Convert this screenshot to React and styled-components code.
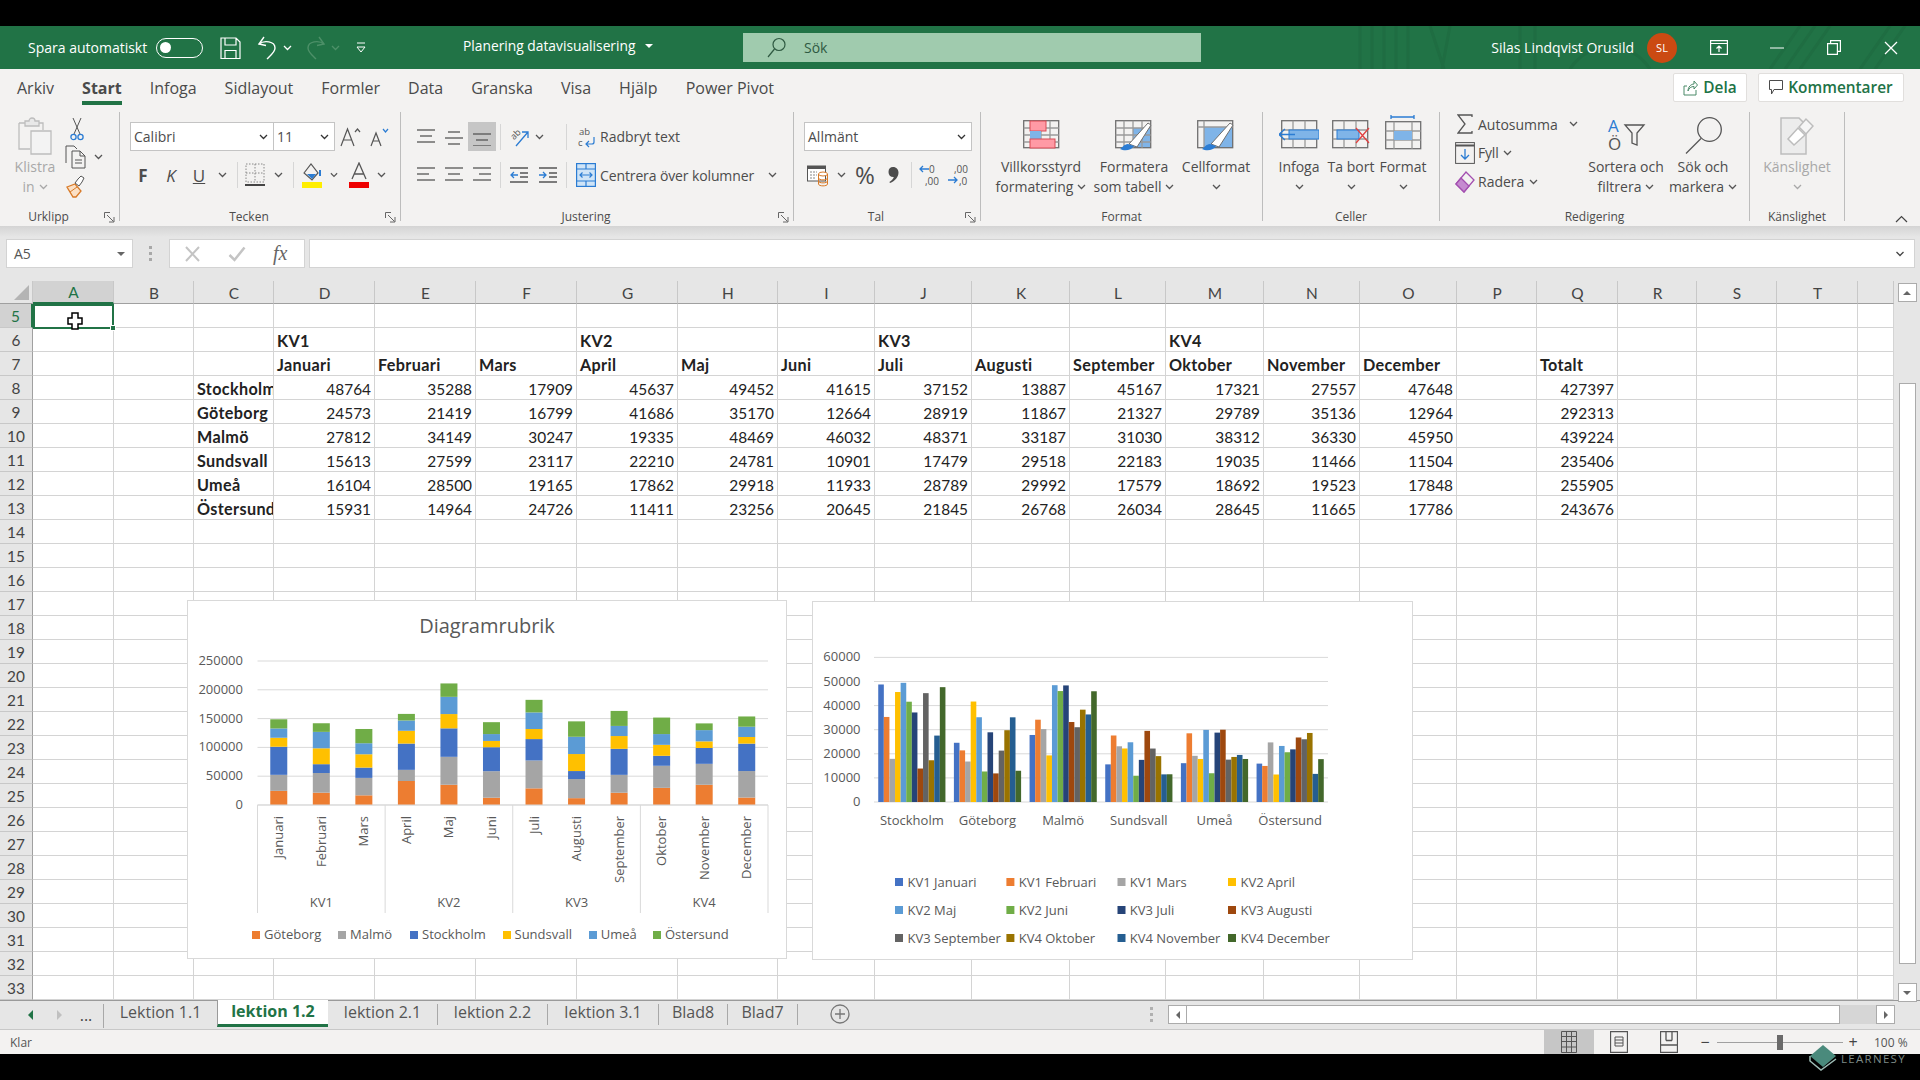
import React from 'react';
import styled, { createGlobalStyle } from 'styled-components';

const uiFont = `'Open Sans', 'Noto Sans', sans-serif`;
const cellFont = `'Lato', 'Open Sans', sans-serif`;
const green = '#217346';
const line = '#d4d4d4';

const GlobalStyle = createGlobalStyle`
  html, body { margin: 0; padding: 0; background: #000; }
  body { font-family: ${uiFont}; overflow: hidden; }
`;

// ---------- data ----------
const months = ['Januari', 'Februari', 'Mars', 'April', 'Maj', 'Juni', 'Juli', 'Augusti', 'September', 'Oktober', 'November', 'December'];
const sales = {
  Stockholm: [48764, 35288, 17909, 45637, 49452, 41615, 37152, 13887, 45167, 17321, 27557, 47648, 427397],
  'Göteborg': [24573, 21419, 16799, 41686, 35170, 12664, 28919, 11867, 21327, 29789, 35136, 12964, 292313],
  'Malmö': [27812, 34149, 30247, 19335, 48469, 46032, 48371, 33187, 31030, 38312, 36330, 45950, 439224],
  Sundsvall: [15613, 27599, 23117, 22210, 24781, 10901, 17479, 29518, 22183, 19035, 11466, 11504, 235406],
  'Umeå': [16104, 28500, 19165, 17862, 29918, 11933, 28789, 29992, 17579, 18692, 19523, 17848, 255905],
  'Östersund': [15931, 14964, 24726, 11411, 23256, 20645, 21845, 26768, 26034, 28645, 11665, 17786, 243676],
};
const cities = Object.keys(sales);
const columns = [['A', 81], ['B', 80], ['C', 80], ['D', 101], ['E', 101], ['F', 101], ['G', 101], ['H', 100], ['I', 97], ['J', 97], ['K', 98], ['L', 96], ['M', 98], ['N', 96], ['O', 97], ['P', 80], ['Q', 81], ['R', 79], ['S', 80], ['T', 81], ['', 36]];
const rows = Array.from({ length: 29 }, (_, i) => i + 5);
const palette = ['#4472c4', '#ed7d31', '#a5a5a5', '#ffc000', '#5b9bd5', '#70ad47', '#264478', '#9e480e', '#636363', '#997300', '#255e91', '#43682b'];

function cellFor(row, col) {
  if (row === 6 && [3, 6, 9, 12].includes(col)) return { text: 'KV' + ((col - 3) / 3 + 1), bold: true };
  if (row === 7 && col >= 3 && col <= 14) return { text: months[col - 3], bold: true };
  if (row === 7 && col === 16) return { text: 'Totalt', bold: true };
  if (row >= 8 && row <= 13) {
    const city = cities[row - 8];
    if (col === 2) return { text: city, bold: true };
    if (col >= 3 && col <= 14) return { text: sales[city][col - 3], right: true };
    if (col === 16) return { text: sales[city][12], right: true };
  }
  return null;
}

// ---------- page frame ----------
const Screen = styled.div`
  position: relative;
  width: 1920px;
  height: 1080px;
  display: flex;
  flex-direction: column;
  background: #000;
  overflow: hidden;
`;

const BlackBar = styled.div`
  height: ${({ $h }) => $h}px;
  flex: none;
  background: #000;
`;

// ---------- title bar ----------
const TitleBar = styled.header`
  position: relative;
  height: 43px;
  flex: none;
  display: flex;
  align-items: center;
  padding-left: 28px;
  background: ${green};
  color: #fff;
  font-size: 14px;
`;

const Pattern = styled.svg`
  position: absolute;
  left: 1330px;
  top: 0;
  pointer-events: none;
`;

const AutoSave = styled.span`
  width: 121px;
  white-space: nowrap;
  margin-bottom: 1px;
`;

const Toggle = styled.span`
  box-sizing: border-box;
  width: 47px;
  height: 20px;
  margin-left: 7px;
  border: 1.5px solid #fff;
  border-radius: 10px;
  display: flex;
  align-items: center;
  padding-left: 3px;
  &::before {
    content: '';
    width: 11px;
    height: 11px;
    border-radius: 50%;
    background: #fff;
  }
`;

const Slot = styled.span`
  flex: none;
  position: relative;
  width: ${({ $w }) => $w}px;
  margin-left: ${({ $ml }) => $ml || 0}px;
  display: flex;
  align-items: center;
  justify-content: center;
`;

const DocTitle = styled.span`
  width: 280px;
  margin-left: 97px;
  margin-bottom: 4px;
  display: flex;
  align-items: center;
  gap: 10px;
  white-space: nowrap;
  font-size: 13.8px;
`;

const SearchBox = styled.div`
  width: 458px;
  height: 29px;
  display: flex;
  align-items: center;
  padding-left: 24px;
  gap: 18px;
  box-sizing: border-box;
  background: #a0cbae;
  color: #2f5a42;
  font-size: 14px;
`;

const TitleRight = styled.div`
  position: relative;
  margin-left: auto;
  display: flex;
  align-items: center;
`;

const UserName = styled.span`
  font-size: 14px;
  white-space: nowrap;
  margin-bottom: 1px;
`;

const Avatar = styled.span`
  width: 30px;
  height: 30px;
  margin: 0 13px;
  border-radius: 50%;
  background: #cb4a12;
  font-size: 11px;
  display: flex;
  align-items: center;
  justify-content: center;
`;

// ---------- ribbon tabs ----------
const TabRow = styled.nav`
  height: 41px;
  flex: none;
  display: flex;
  align-items: flex-start;
  padding-left: 3px;
  background: #f3f2f1;
  color: #4a4a4a;
  font-size: 16px;
`;

const RibbonTab = styled.span`
  box-sizing: border-box;
  height: 36px;
  margin: 0 14px;
  padding-top: 8px;
  line-height: 22px;
  white-space: nowrap;
  border-bottom: 4px solid ${({ $active }) => ($active ? green : 'transparent')};
  font-weight: ${({ $active }) => ($active ? 700 : 400)};
`;

const ShareGroup = styled.div`
  margin: 4px 16px 0 auto;
  display: flex;
  gap: 11px;
`;

const ShareButton = styled.span`
  box-sizing: border-box;
  height: 29px;
  width: ${({ $w }) => $w}px;
  display: flex;
  align-items: center;
  justify-content: center;
  gap: 5px;
  background: #fff;
  border: 1px solid #e1dfdd;
  border-radius: 2px;
  color: ${green};
  font-weight: 600;
  font-size: 15.4px;
`;

// ---------- ribbon ----------
const Ribbon = styled.section`
  height: 116px;
  flex: none;
  display: flex;
  background: #f3f2f1;
  color: #4c4c4c;
  font-size: 14px;
`;

const Group = styled.div`
  box-sizing: border-box;
  width: ${({ $w }) => $w}px;
  height: 109px;
  margin: 2px 0 5px;
  flex: none;
  display: flex;
  flex-direction: column;
  border-right: 1px solid #bdbdbd;
`;

const GroupBody = styled.div`
  flex: 1;
  min-height: 0;
  display: flex;
  padding-left: ${({ $pl }) => $pl || 0}px;
`;

const Stack = styled.div`
  display: flex;
  flex-direction: column;
  width: ${({ $w }) => ($w ? `${$w}px` : 'auto')};
`;

const LabelRow = styled.div`
  position: relative;
  box-sizing: border-box;
  height: 20px;
  margin-bottom: -6px;
  flex: none;
  text-align: center;
  font-size: 12px;
  line-height: 20px;
  padding-right: ${({ $launcher }) => ($launcher ? 22 : 0)}px;
`;

const Launcher = styled.svg`
  position: absolute;
  right: 4px;
  top: 5px;
`;

const ToolRow = styled.div`
  display: flex;
  align-items: center;
  height: ${({ $h }) => $h || 30}px;
  margin-top: ${({ $mt }) => $mt || 0}px;
  padding-left: ${({ $pl }) => $pl || 0}px;
  white-space: nowrap;
`;

const Select = styled.span`
  box-sizing: border-box;
  flex: none;
  width: ${({ $w }) => $w}px;
  height: 29px;
  margin-left: ${({ $ml }) => $ml || 0}px;
  display: flex;
  align-items: center;
  justify-content: space-between;
  padding: 0 5px 0 3px;
  background: #fff;
  border: 1px solid #c4c4c4;
  font-size: 14px;
`;

const Divider = styled.span`
  flex: none;
  width: 1px;
  height: 26px;
  margin-left: ${({ $ml }) => $ml || 0}px;
  background: #d6d6d6;
`;

const Selected = styled.span`
  flex: none;
  width: 28px;
  height: 29px;
  background: #c6c6c6;
  display: flex;
  align-items: center;
  justify-content: center;
`;

const StyleLetter = styled.span`
  font-size: ${({ $size }) => $size || 17}px;
  line-height: 1;
  font-weight: ${({ $bold }) => ($bold ? 700 : 400)};
  font-style: ${({ $italic }) => ($italic ? 'italic' : 'normal')};
  text-decoration: ${({ $under }) => ($under ? 'underline' : 'none')};
`;

const ToolText = styled.span`
  flex: none;
  width: ${({ $w }) => ($w ? `${$w}px` : 'auto')};
  margin-left: ${({ $ml }) => $ml || 0}px;
  letter-spacing: ${({ $ls }) => $ls || 0}px;
`;

const BigButton = styled.div`
  flex: none;
  width: ${({ $w }) => $w}px;
  display: flex;
  flex-direction: column;
  align-items: center;
  padding-top: 5px;
  color: ${({ $off }) => ($off ? '#a8a8a8' : 'inherit')};
  white-space: nowrap;
`;

const BigIcon = styled.div`
  margin-top: ${({ $mt }) => $mt || 0}px;
  height: ${({ $mt }) => 40 - ($mt || 0)}px;
  display: flex;
  align-items: flex-start;
  justify-content: center;
`;

const BigLine = styled.div`
  height: 20px;
  line-height: 20px;
  display: flex;
  align-items: center;
  gap: 4px;
`;

const Collapse = styled.div`
  flex: 1;
  align-self: flex-end;
  display: flex;
  justify-content: flex-end;
  padding: 0 12px 3px 0;
`;

// ---------- formula bar ----------
const FormulaArea = styled.div`
  height: 55px;
  flex: none;
  box-sizing: border-box;
  display: flex;
  align-items: flex-start;
  padding: 13px 5px 0 6px;
  background: linear-gradient(#d4d4d4 0, #e6e6e6 11px);
  color: #555;
`;

const Box = styled.div`
  box-sizing: border-box;
  height: 29px;
  width: ${({ $w }) => ($w ? `${$w}px` : 'auto')};
  flex: ${({ $w }) => ($w ? 'none' : 1)};
  margin-left: ${({ $ml }) => $ml || 0}px;
  display: flex;
  align-items: center;
  justify-content: ${({ $between }) => ($between ? 'space-between' : 'flex-start')};
  padding: 0 7px;
  background: #fff;
  border: 1px solid #d3d3d3;
  font-size: 14px;
`;

const Dots = styled.div`
  width: 3px;
  height: 15px;
  margin: 7px 0 0 16px;
  background: repeating-linear-gradient(#a8a8a8 0 3px, transparent 3px 6px);
`;

const FxIcon = styled.span`
  font-family: 'Liberation Serif', serif;
  font-style: italic;
  font-size: 20px;
  color: #666;
  margin-left: 27px;
`;

// ---------- sheet ----------
const SheetArea = styled.div`
  position: relative;
  height: 719px;
  flex: none;
  display: flex;
  background: #fff;
`;

const SheetGrid = styled.div`
  display: grid;
  grid-template-columns: 33px ${({ $cols }) => $cols};
  grid-template-rows: 23px repeat(29, 24px);
  width: 1894px;
  font-family: ${cellFont};
  font-size: 15.4px;
  color: #222;
`;

const Corner = styled.div`
  position: relative;
  background: #e6e6e6;
  border-right: 1px solid #c8c8c8;
  border-bottom: 1px solid #a0a0a0;
  box-sizing: border-box;
  &::after {
    content: '';
    position: absolute;
    right: 3px;
    bottom: 3px;
    border-style: solid;
    border-width: 0 0 15px 15px;
    border-color: transparent transparent #b4b4b4 transparent;
  }
`;

const ColHead = styled.div`
  box-sizing: border-box;
  display: flex;
  align-items: center;
  justify-content: center;
  padding: 1px 0 0 1px;
  background: ${({ $on }) => ($on ? '#d2d2d2' : '#e6e6e6')};
  color: ${({ $on }) => ($on ? green : '#444')};
  border-right: 1px solid #c8c8c8;
  border-bottom: ${({ $on }) => ($on ? `2px solid ${green}` : '1px solid #a0a0a0')};
`;

const RowHead = styled.div`
  box-sizing: border-box;
  display: flex;
  align-items: center;
  justify-content: center;
  background: ${({ $on }) => ($on ? '#d2d2d2' : '#e6e6e6')};
  color: ${({ $on }) => ($on ? green : '#444')};
  border-right: ${({ $on }) => ($on ? `2px solid ${green}` : '1px solid #a0a0a0')};
  border-bottom: 1px solid #c8c8c8;
`;

const Cell = styled.div`
  box-sizing: border-box;
  min-width: 0;
  overflow: hidden;
  white-space: nowrap;
  display: flex;
  align-items: center;
  justify-content: ${({ $right }) => ($right ? 'flex-end' : 'flex-start')};
  padding: ${({ $right }) => ($right ? 2 : 1)}px 3px 0;
  font-weight: ${({ $bold }) => ($bold ? 700 : 400)};
  font-size: ${({ $bold }) => ($bold ? 16.2 : 15.4)}px;
  letter-spacing: ${({ $bold }) => ($bold ? 0.35 : 0)}px;
  border-right: 1px solid ${line};
  border-bottom: 1px solid ${line};
`;

const SelectionBox = styled.div`
  position: absolute;
  left: 33px;
  top: 23px;
  width: 81px;
  height: 25px;
  box-sizing: border-box;
  border: 2px solid ${green};
  &::after {
    content: '';
    position: absolute;
    right: -4px;
    bottom: -4px;
    width: 6px;
    height: 6px;
    background: ${green};
    border: 1px solid #fff;
    box-sizing: border-box;
  }
`;

const CursorMark = styled.svg`
  position: absolute;
  left: 67px;
  top: 31px;
`;

const ChartFrame = styled.figure`
  position: absolute;
  left: ${({ $x }) => $x}px;
  top: ${({ $y }) => $y}px;
  width: ${({ $w }) => $w}px;
  height: ${({ $h }) => $h}px;
  margin: 0;
  box-sizing: border-box;
  background: #fff;
  border: 1px solid #d9d9d9;
`;

const ChartSvg = styled.svg`
  display: block;
  position: absolute;
  left: -1px;
  top: -1px;
  font-family: ${uiFont};
  font-size: 13px;
  fill: #595959;
`;

const VScroll = styled.aside`
  flex: 1;
  display: flex;
  flex-direction: column;
  align-items: center;
  background: #e6e6e6;
  padding-top: 2px;
`;

const ScrollButton = styled.span`
  box-sizing: border-box;
  flex: none;
  width: ${({ $w }) => $w || 19}px;
  height: ${({ $h }) => $h || 19}px;
  margin-top: ${({ $mt }) => $mt || 0}px;
  display: flex;
  align-items: center;
  justify-content: center;
  background: #fff;
  border: 1px solid #ababab;
`;

const VThumb = styled.span`
  box-sizing: border-box;
  flex: none;
  width: 17px;
  height: 581px;
  margin-top: 81px;
  background: #fff;
  border: 1px solid #ababab;
`;

// ---------- sheet tabs ----------
const SheetTabs = styled.div`
  height: 30px;
  flex: none;
  box-sizing: border-box;
  display: flex;
  align-items: flex-start;
  background: #e6e6e6;
  border-top: 1px solid #9a9a9a;
  border-bottom: 1px solid #c8c8c8;
  color: #555;
  font-size: 16px;
`;

const NavArea = styled.div`
  width: 103px;
  height: 21px;
  flex: none;
  margin-top: 3px;
  padding-bottom: 3px;
  display: flex;
  align-items: center;
  border-right: 1px solid #a8a8a8;
  color: #444;
`;

const SheetTab = styled.span`
  box-sizing: border-box;
  height: ${({ $active }) => ($active ? 27 : 21)}px;
  margin-top: ${({ $active }) => ($active ? -1 : 3)}px;
  padding-bottom: ${({ $active }) => ($active ? 2 : 5)}px;
  width: ${({ $w }) => $w}px;
  flex: none;
  display: flex;
  align-items: center;
  justify-content: center;
  white-space: nowrap;
  background: ${({ $active }) => ($active ? '#fff' : 'transparent')};
  color: ${({ $active }) => ($active ? green : '#555')};
  font-weight: ${({ $active }) => ($active ? 700 : 400)};
  border-right: ${({ $active, $noline }) => ($active || $noline ? 'none' : '1px solid #a8a8a8')};
  border-bottom: ${({ $active }) => ($active ? `3px solid ${green}` : 'none')};
  border-left: ${({ $active }) => ($active ? '1px solid #9a9a9a' : 'none')};
`;

const AddSheet = styled.svg`
  margin: 3px 0 0 32px;
  flex: none;
`;

const HScroll = styled.div`
  margin: 4px 25px 0 auto;
  width: 727px;
  height: 19px;
  display: flex;
  position: relative;
`;

const HThumb = styled.span`
  box-sizing: border-box;
  width: 655px;
  height: 19px;
  background: #fff;
  border: 1px solid #ababab;
  border-left: none;
`;

const HTrack = styled.span`
  width: 36px;
  background: #d6d6d6;
`;

const Splitter = styled.span`
  position: absolute;
  left: -18px;
  top: 2px;
  width: 3px;
  height: 15px;
  background: repeating-linear-gradient(#b0b0b0 0 3px, transparent 3px 6px);
`;

// ---------- status bar ----------
const StatusBar = styled.footer`
  height: 24px;
  flex: none;
  display: flex;
  align-items: center;
  background: #f3f2f1;
  color: #555;
  font-size: 12px;
  padding-left: 10px;
`;

const ViewSwitch = styled.div`
  margin-left: auto;
  display: flex;
  align-items: center;
  height: 100%;
  padding-right: 10px;
`;

const ViewButton = styled.span`
  width: 50px;
  height: 100%;
  flex: none;
  display: flex;
  align-items: center;
  justify-content: center;
  background: ${({ $on }) => ($on ? '#c6c6c6' : 'transparent')};
`;

const Zoomer = styled.div`
  display: flex;
  align-items: center;
  width: 216px;
  padding-left: 5px;
  box-sizing: border-box;
  height: 100%;
`;

const ZoomTrack = styled.span`
  position: relative;
  width: 126px;
  height: 1px;
  margin: 0 4px 0 6px;
  background: #a0a0a0;
  &::after {
    content: '';
    position: absolute;
    left: 60px;
    top: -7px;
    width: 6px;
    height: 15px;
    background: #6a6a6a;
  }
`;

const ZoomSign = styled.span`
  width: 12px;
  text-align: center;
  font-size: 16px;
  color: #444;
`;

const ZoomValue = styled.span`
  font-size: 12px;
  margin-left: 15px;
  white-space: nowrap;
`;

const Watermark = styled.div`
  position: absolute;
  left: 1808px;
  top: 1044px;
  display: flex;
  align-items: center;
  gap: 3px;
  color: #7d8a86;
  font-size: 11.5px;
  letter-spacing: 1.3px;
`;

// ---------- small icons ----------
const Chevron = ({ color = '#555', w = 9 }) => (
  <svg width={w} height="6" viewBox="0 0 9 6"><path d="M1 1l3.500 3.500L8 1" fill="none" stroke={color} strokeWidth="1.300" /></svg>
);

const LauncherIcon = () => (
  <Launcher width="11" height="11" viewBox="0 0 11 11" fill="none" stroke="#666">
    <path d="M.5 6V.5H6M3 3l6.500 6.500M5 10h5V5" />
  </Launcher>
);

const SaveIcon = () => (
  <svg width="21" height="24" viewBox="0 0 21 24" fill="none" stroke="#fff" strokeWidth="1.200">
    <path d="M1 2h15l4 4v16.500H1z M5 2v7h11V2 M5 22.500v-8h11v8" />
  </svg>
);
const UndoIcon = () => (
  <svg width="21" height="24" viewBox="0 0 21 24" fill="none" stroke="#fff" strokeWidth="1.400">
    <path d="M7 1L2 8l7 1.500" />
    <path d="M2 8c5-4 16-3 16 4 0 4-4 7-8 11" />
  </svg>
);
const RedoIcon = () => (
  <svg width="21" height="24" viewBox="0 0 21 24" fill="none" stroke="#4d9068" strokeWidth="1.400">
    <path d="M14 1l5 7-7 1.500" />
    <path d="M19 8C14 4 3 5 3 12c0 4 4 7 8 11" />
  </svg>
);
const QatIcon = () => (
  <svg width="10" height="11" viewBox="0 0 10 11"><path d="M1 1h8" stroke="#fff" /><path d="M1 5h8L5 10z" fill="none" stroke="#fff" /></svg>
);
const SearchIcon = () => (
  <svg width="19" height="21" viewBox="0 0 19 21" fill="none" stroke="#2f5a42" strokeWidth="1.200"><circle cx="12" cy="7.500" r="6" /><path d="M7.500 12L1 20" /></svg>
);
const RibbonDisplayIcon = () => (
  <svg width="18" height="15" viewBox="0 0 18 15" fill="none" stroke="#fff" strokeWidth="1.200"><path d="M.6.6h16.800v13.800H.6zM.6 3.500h16.800M9 12V6M6.500 8.500L9 6l2.500 2.500" /></svg>
);
const MinimizeIcon = () => <svg width="14" height="2"><path d="M0 1h14" stroke="#fff" /></svg>;
const RestoreIcon = () => (
  <svg width="14" height="15" viewBox="0 0 14 15" fill="none" stroke="#fff" strokeWidth="1.200"><path d="M.6 3.600h9.800v10.800H.6zM3.600 3.600V.6h9.800v10.800h-3" /></svg>
);
const CloseIcon = () => (
  <svg width="14" height="14" viewBox="0 0 14 14" stroke="#fff" strokeWidth="1.300"><path d="M1 1l12 12M13 1L1 13" /></svg>
);
const ShareIcon = () => (
  <svg width="15" height="17" viewBox="0 0 15 17" fill="none" stroke="#4b8a69"><path d="M1 7v9h12v-5M1 7h3M5 12C5 8 8 5 11 5V2l3.500 4L11 10V7.500C8 7.500 6 9 5 12z" /></svg>
);
const CommentIcon = () => (
  <svg width="14" height="15" viewBox="0 0 14 15" fill="none" stroke="#4b4b4b"><path d="M.5.500h13v9H5L2.500 14V9.500h-2z" /></svg>
);

const PasteIcon = () => (
  <svg width="36" height="38" viewBox="0 0 36 38" fill="none" stroke="#bdbdbd" strokeWidth="1.300">
    <path d="M2 6h7M21 6h5V13M2 6v26h11" />
    <path d="M8 4h4a3 3 0 0 1 6 0h4v5H8z" fill="#e8e8e8" />
    <path d="M14 14h20v23H14z" fill="#f3f3f3" />
  </svg>
);
const ScissorsIcon = () => (
  <svg width="14" height="24" viewBox="0 0 14 24" fill="none">
    <path d="M3 1l7 16M11 1L4 17" stroke="#555" />
    <circle cx="3.500" cy="20" r="2.600" stroke="#2b7cd3" strokeWidth="1.300" />
    <circle cx="10.500" cy="20" r="2.600" stroke="#2b7cd3" strokeWidth="1.300" />
  </svg>
);
const CopyIcon = () => (
  <svg width="21" height="24" viewBox="0 0 21 24" fill="none" stroke="#555">
    <path d="M1 18V1h8l3 3M7 6h8l5 5v12H7z" fill="#f3f2f1" />
    <path d="M15 6v5h5M10 15h7M10 18h7" />
  </svg>
);
const PainterIcon = () => (
  <svg width="20" height="24" viewBox="0 0 20 24" fill="none">
    <path d="M1 13l8-3 6 7-5 6H7z" fill="#fbe0c5" stroke="#d87a28" strokeWidth="1.300" />
    <path d="M4 18l7-5" stroke="#d87a28" />
    <path d="M9 9l3-4 3-3 3 2-2 4-3 4z" fill="#fff" stroke="#555" />
  </svg>
);
const FontBigger = ({ up }) => (
  <svg width="22" height="22" viewBox="0 0 22 22" fill="none" stroke="#555" strokeWidth="1.200">
    {up
      ? <path d="M1 20L7.500 3 14 20M3.500 14h8M15 6l2.500-3L20 6" />
      : <path d="M2 20l5-13 5 13M4 15h6" />}
    {!up && <path d="M14 3l2.500 3L19 3" stroke="#2b7cd3" />}
  </svg>
);
const BordersIcon = () => (
  <svg width="20" height="24" viewBox="0 0 20 24" fill="none" stroke="#888" strokeDasharray="1.500 1.500">
    <path d="M1 1h18v18H1zM10 1v18M1 10h18" />
    <path d="M0 22h20" stroke="#444" strokeWidth="2" strokeDasharray="none" />
  </svg>
);
const FillIcon = () => (
  <svg width="22" height="26" viewBox="0 0 22 26" fill="none">
    <path d="M3 11l7-9 7 9-6 7z" stroke="#555" strokeWidth="1.200" />
    <path d="M6 12h9l-4 5z" fill="#2b7cd3" />
    <path d="M19 8v6" stroke="#2b7cd3" strokeWidth="2" />
    <rect x="1" y="20" width="20" height="6" fill="#ffee00" />
  </svg>
);
const FontColorIcon = () => (
  <svg width="20" height="26" viewBox="0 0 20 26" fill="none">
    <path d="M3 17L10 1l7 16M5.500 12h9" stroke="#555" strokeWidth="1.300" />
    <rect x="0" y="20" width="20" height="6" fill="#ee0000" />
  </svg>
);
const AlignIcon = ({ widths, top = 0 }) => (
  <svg width="20" height="18" viewBox="0 0 20 18" fill="none" stroke="#555" strokeWidth="1.300">
    {widths.map(([x1, x2], i) => <path key={i} d={`M${x1} ${top + 2 + i * 6}H${x2}`} />)}
  </svg>
);
const OrientIcon = () => (
  <svg width="20" height="22" viewBox="0 0 20 22" fill="none" overflow="visible">
    <text x="0" y="11" fontSize="9" fill="#555" transform="rotate(-45 6 8)" fontFamily={uiFont}>ab</text>
    <path d="M6 20L18 6M12 6h6v6" stroke="#2b7cd3" strokeWidth="1.300" />
  </svg>
);
const IndentIcon = ({ out }) => (
  <svg width="20" height="18" viewBox="0 0 20 18" fill="none" strokeWidth="1.300">
    <path d="M1 2h18M1 16h18M11 7h8M11 11h8" stroke="#555" />
    <path d={out ? 'M9 9H2M5 6L2 9l3 3' : 'M1 9h7M5 6l3 3-3 3'} stroke="#2b7cd3" />
  </svg>
);
const WrapIcon = () => (
  <svg width="18" height="24" viewBox="0 0 18 24" fill="none" overflow="visible">
    <text x="1" y="9.500" fontSize="9.500" fill="#555" fontFamily={uiFont}>ab</text>
    <text x="0" y="21" fontSize="9.500" fill="#555" fontFamily={uiFont}>c</text>
    <path d="M16 12v5a2 2 0 0 1-2 2H8M11 16l-3 3 3 3" stroke="#2b7cd3" strokeWidth="1.200" />
  </svg>
);
const MergeIcon = () => (
  <svg width="20" height="24" viewBox="0 0 20 24" fill="#cfe4f7" stroke="#2b7cd3" strokeWidth="1.200">
    <rect x=".6" y=".6" width="18.800" height="22.800" />
    <path d="M.6 6h18.800M.6 18h18.800M10 .6V6M10 18v5.400" fill="none" />
    <path d="M4 12h12M6.500 9.500L4 12l2.500 2.500M13.500 9.500L16 12l-2.500 2.500" fill="none" />
  </svg>
);
const AccountingIcon = () => (
  <svg width="22" height="24" viewBox="0 0 22 24" fill="none">
    <rect x=".5" y="3" width="18" height="15" fill="#fff" stroke="#555" />
    <path d="M.5 3h18v3H.5z" fill="#555" />
    <path d="M3 9h7M3 12h7M3 15h6" stroke="#888" strokeDasharray="2 1" />
    <ellipse cx="16" cy="11" rx="4.500" ry="2" fill="#fff" stroke="#d87a28" />
    <path d="M11.500 11v10c0 2.500 9 2.500 9 0V11M11.500 15c0 2.500 9 2.500 9 0M11.500 18c0 2.500 9 2.500 9 0" fill="none" stroke="#d87a28" />
  </svg>
);
const CommaIcon = () => (
  <svg width="11" height="16" viewBox="0 0 11 16"><path d="M5 0c3.500 0 5.500 2.500 5.500 5.500C10.500 10 7 14 2 16l-.6-1c2.600-1.500 4-3.200 4.400-5C2.500 10.200.5 8.200.5 5S2.300 0 5 0z" fill="#4c4c4c" /></svg>
);
const DecimalIcon = ({ more }) => (
  <svg width="22" height="24" viewBox="0 0 22 24" fill="none" overflow="visible">
    <text x={more ? 7 : 10} y="10" fontSize="10" fill="#555" fontFamily={uiFont}>{more ? ',00' : '0'}</text>
    <text x={more ? 12 : 6} y="22" fontSize="10" fill="#555" fontFamily={uiFont}>{more ? ',0' : ',00'}</text>
    <path d={more ? 'M1 17h9M7 14l3 3-3 3' : 'M10 6H1M4 3L1 6l3 3'} stroke="#2b7cd3" strokeWidth="1.300" />
  </svg>
);

const TableGrid = ({ rowsY = [8, 15, 22], colsX = [9, 18, 27] }) => (
  <g fill="none" stroke="#6f6f6f" strokeWidth="1.300">
    <rect x=".7" y=".7" width="35" height="27" />
    {rowsY.map(y => <path key={y} d={`M.7 ${y}h35`} stroke="#9a9a9a" />)}
    {colsX.map(x => <path key={x} d={`M${x} .7v27`} stroke="#9a9a9a" />)}
  </g>
);
const Brush = () => (
  <g>
    <path d="M14 24L33 3l3 2-14 22z" fill="#fff" stroke="#6f6f6f" />
    <path d="M13 24c-4 0-6 4-8 5 4 2 11 2 14-3z" fill="#2b7cd3" />
  </g>
);
const CondFormatIcon = () => (
  <svg width="37" height="30" viewBox="0 0 37 30">
    <TableGrid />
    <rect x="7" y="1" width="16" height="10" fill="#ff9aa5" stroke="#d94a55" />
    <rect x="7" y="11" width="11" height="8" fill="#7fb4e8" />
    <rect x="7" y="19" width="25" height="9" fill="#ff9aa5" stroke="#d94a55" />
  </svg>
);
const TableStyleIcon = () => (
  <svg width="38" height="36" viewBox="0 0 38 36">
    <rect x="18" y="8" width="17" height="20" fill="#7fb4e8" />
    <TableGrid />
    <Brush />
  </svg>
);
const CellStyleIcon = () => (
  <svg width="38" height="36" viewBox="0 0 38 36">
    <rect x="7" y="7" width="29" height="21" fill="#7fb4e8" />
    <TableGrid rowsY={[7]} colsX={[7]} />
    <Brush />
  </svg>
);
const InsertIcon = () => (
  <svg width="40" height="30" viewBox="0 0 40 30">
    <g transform="translate(2 0)"><TableGrid rowsY={[10, 19]} colsX={[12, 24]} /></g>
    <rect x="10" y="10" width="30" height="9" fill="#7fb4e8" stroke="#2b7cd3" />
    <path d="M0 14.500h16M6 9L0 14.500 6 20" fill="none" stroke="#2b7cd3" strokeWidth="1.300" />
  </svg>
);
const DeleteIcon = () => (
  <svg width="38" height="30" viewBox="0 0 38 30">
    <TableGrid rowsY={[10, 19]} colsX={[12, 24]} />
    <rect x="5" y="10" width="22" height="9" fill="#7fb4e8" stroke="#2b7cd3" />
    <path d="M24 8l13 15M37 8L24 23" stroke="#e04040" strokeWidth="1.300" />
  </svg>
);
const FormatCellsIcon = () => (
  <svg width="38" height="36" viewBox="0 0 38 36">
    <path d="M7 1v4M30 1v4M7 3h23" fill="none" stroke="#2b7cd3" strokeWidth="1.300" />
    <g transform="translate(1 7)"><TableGrid rowsY={[10, 19]} colsX={[9, 27]} /></g>
    <rect x="10" y="17" width="18" height="9" fill="#7fb4e8" />
  </svg>
);
const SigmaIcon = () => (
  <svg width="16" height="20" viewBox="0 0 16 20" fill="none" stroke="#555" strokeWidth="1.300"><path d="M15 3V1H1l7 9-7 9h14v-2" /></svg>
);
const FillDownIcon = () => (
  <svg width="20" height="22" viewBox="0 0 20 22" fill="none">
    <rect x=".6" y=".6" width="18.800" height="20.800" stroke="#555" />
    <path d="M.6 3.500h18.800" stroke="#555" strokeWidth="2" />
    <path d="M10 7v10M6 13l4 4 4-4" stroke="#2b7cd3" strokeWidth="1.300" />
  </svg>
);
const EraserIcon = () => (
  <svg width="20" height="22" viewBox="0 0 20 22" fill="none" stroke="#a34fb0" strokeWidth="1.300">
    <path d="M1 13L11 1l8 8L9 21z" />
    <path d="M1 13l8 8 5-6-8-8z" fill="#c58ad0" />
  </svg>
);
const SortIcon = () => (
  <svg width="37" height="36" viewBox="0 0 37 36" fill="none" overflow="visible">
    <text x="0" y="15" fontSize="17" fill="#2b7cd3" fontFamily={uiFont}>A</text>
    <text x="0" y="33" fontSize="17" fill="#555" fontFamily={uiFont}>Ö</text>
    <path d="M17 8h19l-7 8v12l-5-2V16z" stroke="#555" strokeWidth="1.300" />
  </svg>
);
const FindIcon = () => (
  <svg width="37" height="37" viewBox="0 0 37 37" fill="none" stroke="#555" strokeWidth="1.300"><circle cx="24.500" cy="12.500" r="11.800" /><path d="M16 21.500L1 36.500" /></svg>
);
const SensitivityIcon = () => (
  <svg width="34" height="38" viewBox="0 0 34 38" fill="none" stroke="#bdbdbd" strokeWidth="1.500">
    <path d="M1 1h18l7 7v29H1z" fill="#ececec" />
    <path d="M8 22l10-11 7 7-11 10z" fill="#fff" />
    <path d="M19 10l7-8 7 7-7 8z" fill="#f6f6f6" />
  </svg>
);

const CheckMark = () => (
  <svg width="18" height="16" viewBox="0 0 18 16" fill="none" stroke="#c4c4c4" strokeWidth="2.500"><path d="M1.500 9l5 5L16.500 1.500" /></svg>
);
const CrossMark = () => (
  <svg width="15" height="16" viewBox="0 0 15 16" fill="none" stroke="#c4c4c4" strokeWidth="2"><path d="M1 1l13 14M14 1L1 15" /></svg>
);
const Triangle = ({ dir = 'down', color = '#666', s = 5 }) => {
  const d = { down: `M0 0h${2 * s}L${s} ${s}z`, up: `M0 ${s}h${2 * s}L${s} 0z`, left: `M${s} 0v${2 * s}L0 ${s}z`, right: `M0 0v${2 * s}L${s} ${s}z` }[dir];
  const horizontal = dir === 'down' || dir === 'up';
  return <svg width={horizontal ? 2 * s : s} height={horizontal ? s : 2 * s}><path d={d} fill={color} /></svg>;
};

const GridView = () => (
  <svg width="16" height="22" viewBox="0 0 16 22" fill="none" stroke="#555"><path d="M.5.500h15v21H.5zM5.500.500v21M10.500.500v21M.5 5.500h15M.5 10.500h15M.5 16h15" /></svg>
);
const PageView = () => (
  <svg width="18" height="22" viewBox="0 0 18 22" fill="none" stroke="#555"><path d="M.5.500h17v21H.5z" strokeWidth="1.300" /><path d="M5 6h8v9H5zM5 9h8M5 12h8" /></svg>
);
const BreakView = () => (
  <svg width="18" height="22" viewBox="0 0 18 22" fill="none" stroke="#555" strokeWidth="1.300"><path d="M.5.500h17v21H.5zM.5 14h17M6 .5v9M12 .5v9M6 9.500h6" /></svg>
);

// ---------- charts ----------
const StackedChart = () => {
  const y0 = 205;
  const scale = 28.8 / 50000;
  const order = ['Göteborg', 'Malmö', 'Stockholm', 'Sundsvall', 'Umeå', 'Östersund'];
  const colors = ['#ed7d31', '#a5a5a5', '#4472c4', '#ffc000', '#5b9bd5', '#70ad47'];
  const left = 70.5;
  const right = 581;
  const step = (right - left) / 12;
  const legend = [[65, 77], [151, 163], [223, 235], [316, 327.5], [402, 413.7], [466, 478]];
  // the chart in the picture plots a smaller February value for Stockholm than the table shows
  const valueFor = (city, i) => (city === 'Stockholm' && i === 1 ? 15288 : sales[city][i]);
  return (
    <ChartFrame $x={187} $y={319} $w={600} $h={359}>
      <ChartSvg width="600" height="359">
        <text x="300" y="33" fontSize="20" textAnchor="middle">Diagramrubrik</text>
        {[0, 1, 2, 3, 4, 5].map(i => (
          <g key={i}>
            <path d={`M${left} ${y0 - i * 28.8}H${right}`} stroke="#d9d9d9" />
            <text x="56" y={y0 - i * 28.8 + 4} textAnchor="end">{i * 50000}</text>
          </g>
        ))}
        {months.map((m, i) => {
          let base = y0;
          const cx = left + step * (i + 0.5);
          return (
            <g key={m}>
              {order.map((city, c) => {
                const h = valueFor(city, i) * scale;
                base -= h;
                return <rect key={city} x={cx - 8.500} y={base} width="17" height={h} fill={colors[c]} />;
              })}
              <text transform={`translate(${cx + 4.500} 216) rotate(-90)`} textAnchor="end">{m}</text>
            </g>
          );
        })}
        {[left, left + step * 3, left + step * 6, left + step * 9, right].map(x => (
          <path key={x} d={`M${x} ${y0}V313`} stroke="#d9d9d9" />
        ))}
        <path d={`M${left} ${y0}H${right}`} stroke="#d9d9d9" />
        {['KV1', 'KV2', 'KV3', 'KV4'].map((k, i) => (
          <text key={k} x={left + step * (1.5 + i * 3)} y="307" textAnchor="middle">{k}</text>
        ))}
        {order.map((city, i) => (
          <g key={city}>
            <rect x={legend[i][0]} y="331" width="8" height="8" fill={colors[i]} />
            <text x={legend[i][1]} y="339">{city}</text>
          </g>
        ))}
      </ChartSvg>
    </ChartFrame>
  );
};

const ClusteredChart = () => {
  const y0 = 201;
  const scale = 24.1 / 10000;
  const left = 62;
  const right = 516;
  const step = (right - left) / 6;
  const barW = 5.6;
  const legendX = [[83, 95.500], [194.400, 206.700], [305.500, 317.800], [416, 428.500]];
  const labels = months.map((m, i) => `KV${Math.floor(i / 3) + 1} ${m}`);
  return (
    <ChartFrame $x={812} $y={320} $w={601} $h={359}>
      <ChartSvg width="601" height="359">
        {[0, 1, 2, 3, 4, 5, 6].map(i => (
          <g key={i}>
            <path d={`M${left} ${y0 - i * 24.1}H${right}`} stroke="#d9d9d9" />
            <text x="48.500" y={y0 - i * 24.1 + 4} textAnchor="end">{i * 10000}</text>
          </g>
        ))}
        {cities.map((city, c) => {
          const cx = left + step * (c + 0.5);
          return (
            <g key={city}>
              {months.map((m, i) => {
                const h = sales[city][i] * scale;
                return <rect key={m} x={cx + (i - 6) * barW} y={y0 - h} width={barW} height={h} fill={palette[i]} />;
              })}
              <text x={cx} y="224" textAnchor="middle">{city}</text>
            </g>
          );
        })}
        {labels.map((label, i) => {
          const col = i % 4;
          const row = Math.floor(i / 4);
          return (
            <g key={label}>
              <rect x={legendX[col][0]} y={277 + row * 28} width="8" height="8" fill={palette[i]} />
              <text x={legendX[col][1]} y={285.500 + row * 28}>{label}</text>
            </g>
          );
        })}
      </ChartSvg>
    </ChartFrame>
  );
};

// ---------- main parts ----------
const Title = () => (
  <TitleBar>
    <Pattern width="590" height="43" viewBox="0 0 590 43" fill="none" stroke="#1f6d42" strokeWidth="3">
      <path d="M30 0v43M42 0v43M54 0v43M66 0v43M78 0v43M100 0l14 43M120 0l-8 43M190 0v43M205 0v43M240 43c20-30 60-30 80 0M440 43l30-43M455 43l30-43M470 43l30-43M530 43l30-43M545 43l30-43" />
    </Pattern>
    <AutoSave>Spara automatiskt</AutoSave>
    <Toggle />
    <Slot $w={21} $ml={17}><SaveIcon /></Slot>
    <Slot $w={21} $ml={16}><UndoIcon /></Slot>
    <Slot $w={10} $ml={4}><Chevron color="#fff" /></Slot>
    <Slot $w={21} $ml={13}><RedoIcon /></Slot>
    <Slot $w={10} $ml={4}><Chevron color="#4d9068" /></Slot>
    <Slot $w={10} $ml={16}><QatIcon /></Slot>
    <DocTitle>Planering datavisualisering <Triangle color="#fff" s={4} /></DocTitle>
    <SearchBox><SearchIcon /><span>Sök</span></SearchBox>
    <TitleRight>
      <UserName>Silas Lindqvist Orusild</UserName>
      <Avatar>SL</Avatar>
      <Slot $w={58}><RibbonDisplayIcon /></Slot>
      <Slot $w={57}><MinimizeIcon /></Slot>
      <Slot $w={57}><RestoreIcon /></Slot>
      <Slot $w={58}><CloseIcon /></Slot>
    </TitleRight>
  </TitleBar>
);

const Tabs = () => (
  <TabRow>
    {['Arkiv', 'Start', 'Infoga', 'Sidlayout', 'Formler', 'Data', 'Granska', 'Visa', 'Hjälp', 'Power Pivot'].map(t => (
      <RibbonTab key={t} $active={t === 'Start'}>{t}</RibbonTab>
    ))}
    <ShareGroup>
      <ShareButton $w={74}><ShareIcon />Dela</ShareButton>
      <ShareButton $w={146}><CommentIcon />Kommentarer</ShareButton>
    </ShareGroup>
  </TabRow>
);

const alignTop = [[1, 19], [4, 16], [1, 19]];
const alignMid = [[4, 16], [1, 19], [4, 16]];
const leftAlign = [[1, 19], [1, 13], [1, 19]];
const centerAlign = [[1, 19], [4, 16], [1, 19]];
const rightAlign = [[1, 19], [7, 19], [1, 19]];

const RibbonBar = () => (
  <Ribbon>
    <Group $w={120}>
      <GroupBody $pl={10}>
        <BigButton $w={50} $off>
          <BigIcon><PasteIcon /></BigIcon>
          <BigLine>Klistra</BigLine>
          <BigLine>in <Chevron color="#a8a8a8" /></BigLine>
        </BigButton>
        <Stack>
          <ToolRow $mt={3} $h={28} $pl={10}><ScissorsIcon /></ToolRow>
          <ToolRow $h={28} $pl={5}><CopyIcon /><Slot $w={10} $ml={7}><Chevron /></Slot></ToolRow>
          <ToolRow $h={30} $pl={6}><PainterIcon /></ToolRow>
        </Stack>
      </GroupBody>
      <LabelRow $launcher>Urklipp<LauncherIcon /></LabelRow>
    </Group>

    <Group $w={281}>
      <GroupBody>
        <Stack>
          <ToolRow $mt={10} $h={29} $pl={10}>
            <Select $w={144}>Calibri<Chevron color="#333" /></Select>
            <Select $w={62} $ml={-1}>11<Chevron color="#333" /></Select>
            <Slot $w={30} $ml={1}><FontBigger up /></Slot>
            <Slot $w={28}><FontBigger /></Slot>
          </ToolRow>
          <ToolRow $mt={9} $pl={9}>
            <Slot $w={28}><StyleLetter $bold>F</StyleLetter></Slot>
            <Slot $w={28}><StyleLetter $italic>K</StyleLetter></Slot>
            <Slot $w={28}><StyleLetter $under>U</StyleLetter></Slot>
            <Slot $w={18}><Chevron /></Slot>
            <Divider $ml={6} />
            <Slot $w={34}><BordersIcon /></Slot>
            <Slot $w={12}><Chevron /></Slot>
            <Divider $ml={9} />
            <Slot $w={36}><FillIcon /></Slot>
            <Slot $w={8}><Chevron /></Slot>
            <Slot $w={32} $ml={5}><FontColorIcon /></Slot>
            <Slot $w={12}><Chevron /></Slot>
          </ToolRow>
        </Stack>
      </GroupBody>
      <LabelRow $launcher>Tecken<LauncherIcon /></LabelRow>
    </Group>

    <Group $w={393}>
      <GroupBody>
        <Stack>
          <ToolRow $mt={10} $h={29} $pl={11}>
            <Slot $w={28}><AlignIcon widths={alignTop} /></Slot>
            <Slot $w={28}><AlignIcon widths={alignMid} top={2} /></Slot>
            <Selected><AlignIcon widths={alignTop} top={4} /></Selected>
            <Divider $ml={4} />
            <Slot $w={26} $ml={6}><OrientIcon /></Slot>
            <Slot $w={12}><Chevron /></Slot>
            <Divider $ml={21} />
            <Slot $w={20} $ml={10}><WrapIcon /></Slot>
            <ToolText $ml={3}>Radbryt text</ToolText>
          </ToolRow>
          <ToolRow $mt={9} $pl={11}>
            <Slot $w={28}><AlignIcon widths={leftAlign} /></Slot>
            <Slot $w={28}><AlignIcon widths={centerAlign} /></Slot>
            <Slot $w={28}><AlignIcon widths={rightAlign} /></Slot>
            <Divider $ml={4} />
            <Slot $w={26} $ml={5}><IndentIcon out /></Slot>
            <Slot $w={28} $ml={2}><IndentIcon /></Slot>
            <Divider $ml={4} />
            <Slot $w={22} $ml={8}><MergeIcon /></Slot>
            <ToolText $ml={3} $w={167} $ls={-0.12}>Centrera över kolumner</ToolText>
            <Slot $w={10}><Chevron /></Slot>
          </ToolRow>
        </Stack>
      </GroupBody>
      <LabelRow $launcher>Justering<LauncherIcon /></LabelRow>
    </Group>

    <Group $w={187}>
      <GroupBody>
        <Stack>
          <ToolRow $mt={10} $h={29} $pl={10}>
            <Select $w={168}>Allmänt<Chevron color="#333" /></Select>
          </ToolRow>
          <ToolRow $mt={9} $pl={10}>
            <Slot $w={28}><AccountingIcon /></Slot>
            <Slot $w={12} $ml={3}><Chevron /></Slot>
            <Slot $w={30} $ml={3}><StyleLetter $size={24}>%</StyleLetter></Slot>
            <Slot $w={26}><CommaIcon /></Slot>
            <Divider $ml={5} />
            <Slot $w={28} $ml={4}><DecimalIcon /></Slot>
            <Slot $w={28}><DecimalIcon more /></Slot>
          </ToolRow>
        </Stack>
      </GroupBody>
      <LabelRow $launcher>Tal<LauncherIcon /></LabelRow>
    </Group>

    <Group $w={282}>
      <GroupBody $pl={16}>
        <BigButton $w={88}>
          <BigIcon $mt={3}><CondFormatIcon /></BigIcon>
          <BigLine>Villkorsstyrd</BigLine>
          <BigLine>formatering <Chevron /></BigLine>
        </BigButton>
        <BigButton $w={98}>
          <BigIcon $mt={3}><TableStyleIcon /></BigIcon>
          <BigLine>Formatera</BigLine>
          <BigLine>som tabell <Chevron /></BigLine>
        </BigButton>
        <BigButton $w={66}>
          <BigIcon $mt={3}><CellStyleIcon /></BigIcon>
          <BigLine>Cellformat</BigLine>
          <BigLine><Chevron /></BigLine>
        </BigButton>
      </GroupBody>
      <LabelRow>Format</LabelRow>
    </Group>

    <Group $w={177}>
      <GroupBody $pl={10}>
        <BigButton $w={52}>
          <BigIcon $mt={3}><InsertIcon /></BigIcon>
          <BigLine>Infoga</BigLine>
          <BigLine><Chevron /></BigLine>
        </BigButton>
        <BigButton $w={52}>
          <BigIcon $mt={3}><DeleteIcon /></BigIcon>
          <BigLine>Ta bort</BigLine>
          <BigLine><Chevron /></BigLine>
        </BigButton>
        <BigButton $w={52}>
          <BigIcon $mt={-3}><FormatCellsIcon /></BigIcon>
          <BigLine>Format</BigLine>
          <BigLine><Chevron /></BigLine>
        </BigButton>
      </GroupBody>
      <LabelRow>Celler</LabelRow>
    </Group>

    <Group $w={310}>
      <GroupBody>
        <Stack $w={145}>
          <ToolRow $mt={-2} $h={28} $pl={15}><Slot $w={20}><SigmaIcon /></Slot><ToolText $ml={3} $w={90}>Autosumma</ToolText><Slot $w={10}><Chevron /></Slot></ToolRow>
          <ToolRow $h={29} $pl={15}><Slot $w={20}><FillDownIcon /></Slot><ToolText $ml={3} $ls={-0.2}>Fyll</ToolText><Slot $w={10} $ml={4}><Chevron /></Slot></ToolRow>
          <ToolRow $h={29} $pl={15}><Slot $w={20}><EraserIcon /></Slot><ToolText $ml={3}>Radera</ToolText><Slot $w={10} $ml={4}><Chevron /></Slot></ToolRow>
        </Stack>
        <BigButton $w={82}>
          <BigIcon><SortIcon /></BigIcon>
          <BigLine>Sortera och</BigLine>
          <BigLine>filtrera <Chevron /></BigLine>
        </BigButton>
        <BigButton $w={72}>
          <BigIcon><FindIcon /></BigIcon>
          <BigLine>Sök och</BigLine>
          <BigLine>markera <Chevron /></BigLine>
        </BigButton>
      </GroupBody>
      <LabelRow>Redigering</LabelRow>
    </Group>

    <Group $w={95}>
      <GroupBody>
        <BigButton $w={94} $off>
          <BigIcon><SensitivityIcon /></BigIcon>
          <BigLine>Känslighet</BigLine>
          <BigLine><Chevron color="#a8a8a8" /></BigLine>
        </BigButton>
      </GroupBody>
      <LabelRow>Känslighet</LabelRow>
    </Group>

    <Collapse>
      <svg width="13" height="8" viewBox="0 0 13 8" fill="none" stroke="#444" strokeWidth="1.200"><path d="M1 7l5.500-5.500L12 7" /></svg>
    </Collapse>
  </Ribbon>
);

const FormulaBar = () => (
  <FormulaArea>
    <Box $w={127} $between>A5<Triangle s={4} /></Box>
    <Dots />
    <Box $w={136} $ml={17}>
      <Slot $w={16} $ml={7}><CrossMark /></Slot>
      <Slot $w={18} $ml={28}><CheckMark /></Slot>
      <FxIcon>fx</FxIcon>
    </Box>
    <Box $ml={4}>
      <Slot $w={10} $ml={1578}><Chevron color="#444" w={11} /></Slot>
    </Box>
  </FormulaArea>
);

const Sheet = () => (
  <SheetArea>
    <SheetGrid $cols={columns.map(c => `${c[1]}px`).join(' ')}>
      <Corner />
      {columns.map(([name], i) => <ColHead key={i} $on={name === 'A'}>{name}</ColHead>)}
      {rows.map(row => (
        <React.Fragment key={row}>
          <RowHead $on={row === 5}>{row}</RowHead>
          {columns.map((_, col) => {
            const cell = cellFor(row, col);
            return <Cell key={col} $bold={cell && cell.bold} $right={cell && cell.right}>{cell && cell.text}</Cell>;
          })}
        </React.Fragment>
      ))}
    </SheetGrid>
    <SelectionBox />
    <CursorMark width="16" height="18" viewBox="0 0 16 18">
      <path d="M5 1h6v5h4v6h-4v5H5v-5H1V6h4z" fill="#fff" stroke="#000" strokeWidth="1.500" />
    </CursorMark>
    <StackedChart />
    <ClusteredChart />
    <VScroll>
      <ScrollButton><Triangle dir="up" s={4} /></ScrollButton>
      <VThumb />
      <ScrollButton $mt={19}><Triangle s={4} /></ScrollButton>
    </VScroll>
  </SheetArea>
);

const BottomTabs = () => (
  <SheetTabs>
    <NavArea>
      <Slot $w={12} $ml={24}><Triangle dir="left" color={green} s={5} /></Slot>
      <Slot $w={12} $ml={17}><Triangle dir="right" color="#c0c0c0" s={5} /></Slot>
      <Slot $w={16} $ml={13}>...</Slot>
    </NavArea>
    <SheetTab $w={113} $noline>Lektion 1.1</SheetTab>
    <SheetTab $w={111} $active>lektion 1.2</SheetTab>
    <SheetTab $w={110}>lektion 2.1</SheetTab>
    <SheetTab $w={110}>lektion 2.2</SheetTab>
    <SheetTab $w={111}>lektion 3.1</SheetTab>
    <SheetTab $w={69}>Blad8</SheetTab>
    <SheetTab $w={70}>Blad7</SheetTab>
    <AddSheet width="20" height="20" viewBox="0 0 20 20" fill="none" stroke="#777" strokeWidth="1.300"><circle cx="10" cy="10" r="9" /><path d="M10 5v10M5 10h10" /></AddSheet>
    <HScroll>
      <Splitter />
      <ScrollButton $w={19}><Triangle dir="left" color="#666" s={4} /></ScrollButton>
      <HThumb />
      <HTrack />
      <ScrollButton $w={19}><Triangle dir="right" color="#666" s={4} /></ScrollButton>
    </HScroll>
  </SheetTabs>
);

const Status = () => (
  <StatusBar>
    Klar
    <ViewSwitch>
      <ViewButton $on><GridView /></ViewButton>
      <ViewButton><PageView /></ViewButton>
      <ViewButton><BreakView /></ViewButton>
      <Zoomer>
        <ZoomSign>−</ZoomSign>
        <ZoomTrack />
        <ZoomSign>+</ZoomSign>
        <ZoomValue>100 %</ZoomValue>
      </Zoomer>
    </ViewSwitch>
  </StatusBar>
);

export default function App() {
  return (
    <Screen>
      <GlobalStyle />
      <BlackBar $h={26} />
      <Title />
      <Tabs />
      <RibbonBar />
      <FormulaBar />
      <Sheet />
      <BottomTabs />
      <Status />
      <BlackBar $h={26} />
      <Watermark>
        <svg width="30" height="28" viewBox="0 0 30 28">
          <path d="M15 1l13 11-13 11L2 12z" fill="#4a8a7c" />
          <path d="M2 12v5l11 9 15-11" fill="none" stroke="#9fbdb6" strokeWidth="1.500" />
        </svg>
        LEARNESY
      </Watermark>
    </Screen>
  );
}
